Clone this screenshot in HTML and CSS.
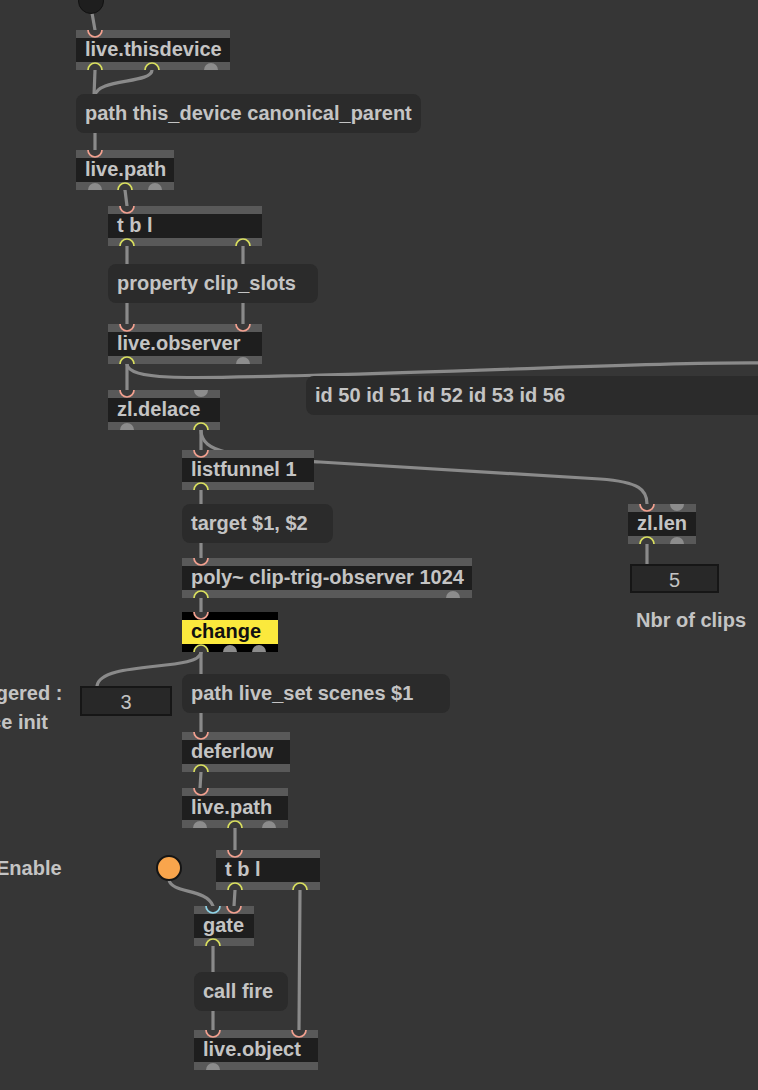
FILE: index.html
```html
<!DOCTYPE html>
<html>
<head>
<meta charset="utf-8">
<link rel="stylesheet" href="styles.css">
</head>
<body>
<div class="patcher">
  <svg class="cords" width="758" height="1090" viewBox="0 0 758 1090">
    <g fill="none" stroke="#8a8a8a" stroke-width="3.2" stroke-linecap="round">
      <path d="M92 13 L95 30"/>
      <path d="M95 70 L94 96"/>
      <path d="M152 70 C152 84, 96 78, 95 96"/>
      <path d="M95 133 L95 150"/>
      <path d="M125 190 L127 206"/>
      <path d="M127 246 L127 264"/>
      <path d="M243 246 L243 324"/>
      <path d="M127 303 L127 324"/>
      <path d="M127 364 L127 390"/>
      <path d="M127 364 C128 382, 200 378, 320 375 C500 371, 650 362, 762 363"/>
      <path d="M201 430 L201 450"/>
      <path d="M201 430 C201 455, 240 456, 320 462 L600 479 C640 482, 647 490, 647 504"/>
      <path d="M201 490 L201 504"/>
      <path d="M201 543 L201 558"/>
      <path d="M201 598 L201 612"/>
      <path d="M201 652 L201 674"/>
      <path d="M201 652 C201 672, 100 660, 97 686"/>
      <path d="M201 713 L201 732"/>
      <path d="M201 772 L200 788"/>
      <path d="M235 828 L235 850"/>
      <path d="M235 890 L234 906"/>
      <path d="M300 890 L299 1030"/>
      <path d="M169 880 C172 894, 206 888, 213 906"/>
      <path d="M213 946 L213 972"/>
      <path d="M213 1011 L213 1030"/>
      <path d="M647 544 L647 564"/>
    </g>
  </svg>

  <div class="dot dot-top"></div>
  <div class="dot dot-toggle"></div>

  <div class="obj n-thisdevice"><span class="t">live.thisdevice</span></div>
  <div class="msg m-path1">path this_device canonical_parent</div>
  <div class="obj n-livepath1"><span class="t">live.path</span></div>
  <div class="obj n-tbl1"><span class="t">t b l</span></div>
  <div class="msg m-property">property clip_slots</div>
  <div class="obj n-observer"><span class="t">live.observer</span></div>
  <div class="obj n-delace"><span class="t">zl.delace</span></div>
  <div class="msg m-ids">id 50 id 51 id 52 id 53 id 56</div>
  <div class="obj n-listfunnel"><span class="t">listfunnel 1</span></div>
  <div class="msg m-target">target $1, $2</div>
  <div class="obj n-poly"><span class="t">poly~ clip-trig-observer 1024</span></div>
  <div class="obj obj-change n-change"><span class="t">change</span></div>
  <div class="obj n-zllen"><span class="t">zl.len</span></div>
  <div class="num num-5">5</div>
  <div class="comment c-nbr">Nbr of clips</div>
  <div class="comment c-trig">Triggered :<br>Since init</div>
  <div class="num num-3">3</div>
  <div class="msg m-scenes">path live_set scenes $1</div>
  <div class="obj n-deferlow"><span class="t">deferlow</span></div>
  <div class="obj n-livepath2"><span class="t">live.path</span></div>
  <div class="comment c-enable">Enable</div>
  <div class="obj n-tbl2"><span class="t">t b l</span></div>
  <div class="obj n-gate"><span class="t">gate</span></div>
  <div class="msg m-callfire">call fire</div>
  <div class="obj n-liveobject"><span class="t">live.object</span></div>

  <svg class="ports" width="758" height="1090" viewBox="0 0 758 1090">
    <defs>
      <path id="in" d="M-7 0 A7 7 0 0 0 7 0"/>
      <path id="out" d="M-7 0 A7 7 0 0 1 7 0"/>
    </defs>
    <g class="pin">
      <use href="#in" x="95" y="30"/>
      <use href="#in" x="95" y="150"/>
      <use href="#in" x="127" y="206"/>
      <use href="#in" x="127" y="324"/>
      <use href="#in" x="243" y="324"/>
      <use href="#in" x="127" y="390"/>
      <use href="#in" x="201" y="450"/>
      <use href="#in" x="201" y="558"/>
      <use href="#in" x="201" y="612"/>
      <use href="#in" x="647" y="504"/>
      <use href="#in" x="201" y="732"/>
      <use href="#in" x="201" y="788"/>
      <use href="#in" x="235" y="850"/>
      <use href="#in" x="234" y="906"/>
      <use href="#in" x="213" y="1030"/>
      <use href="#in" x="299" y="1030"/>
    </g>
    <g class="pin-cold">
      <use href="#in" x="213" y="906"/>
    </g>
    <g class="pout">
      <use href="#out" x="95" y="70"/>
      <use href="#out" x="152" y="70"/>
      <use href="#out" x="125" y="190"/>
      <use href="#out" x="127" y="246"/>
      <use href="#out" x="243" y="246"/>
      <use href="#out" x="127" y="364"/>
      <use href="#out" x="201" y="430"/>
      <use href="#out" x="201" y="490"/>
      <use href="#out" x="201" y="598"/>
      <use href="#out" x="201" y="652"/>
      <use href="#out" x="647" y="544"/>
      <use href="#out" x="201" y="772"/>
      <use href="#out" x="235" y="828"/>
      <use href="#out" x="235" y="890"/>
      <use href="#out" x="300" y="890"/>
      <use href="#out" x="213" y="946"/>
    </g>
    <g class="pgray">
      <use href="#out" x="211" y="70"/>
      <use href="#out" x="95" y="190"/>
      <use href="#out" x="155" y="190"/>
      <use href="#out" x="243" y="364"/>
      <use href="#in" x="201" y="390"/>
      <use href="#out" x="127" y="430"/>
      <use href="#out" x="453" y="598"/>
      <use href="#out" x="230" y="652"/>
      <use href="#out" x="259" y="652"/>
      <use href="#in" x="677" y="504"/>
      <use href="#out" x="677" y="544"/>
      <use href="#out" x="200" y="828"/>
      <use href="#out" x="269" y="828"/>
      <use href="#out" x="213" y="1070"/>
    </g>
  </svg>
</div>
</body>
</html>
```

FILE: styles.css
```css
html, body {
  margin: 0;
  padding: 0;
  background: #363636;
}

.patcher {
  position: relative;
  width: 758px;
  height: 1090px;
  overflow: hidden;
  background: #363636;
  font-family: "Liberation Sans", Arial, sans-serif;
  font-weight: bold;
  font-size: 20px;
  color: #c4c4c4;
}

.cords, .ports {
  position: absolute;
  left: 0;
  top: 0;
}
.cords { z-index: 0; }
.ports { z-index: 3; }

.pin use { fill: #3a3a3a; stroke: #f2a08f; stroke-width: 1.7; }
.pin-cold use { fill: #3a3a3a; stroke: #8fd3e6; stroke-width: 1.7; }
.pout use { fill: #3a3a3a; stroke: #d9df5e; stroke-width: 1.7; }
.pgray use { fill: #8c8c8c; stroke: none; }

/* objects */
.obj {
  position: absolute;
  z-index: 1;
  box-sizing: border-box;
  height: 40px;
  padding: 8px 0;
  background: #595959;
  white-space: nowrap;
}
.obj .t {
  display: block;
  height: 24px;
  line-height: 22px;
  padding-left: 9px;
  background: #1e1e1e;
}
.obj-change { background: #000; }
.obj-change .t { background: #fbe93d; color: #111; }

/* messages */
.msg {
  position: absolute;
  z-index: 1;
  box-sizing: border-box;
  height: 39px;
  line-height: 39px;
  padding-left: 9px;
  border-radius: 8px;
  background: #2b2b2b;
  white-space: nowrap;
}

/* number boxes */
.num {
  position: absolute;
  z-index: 1;
  box-sizing: border-box;
  border: 2px solid #161616;
  background: #282828;
  text-align: center;
  font-weight: normal;
  font-size: 20px;
  line-height: 25px;
  padding-top: 2px;
}

/* comments */
.comment {
  position: absolute;
  z-index: 1;
  line-height: 29px;
  white-space: nowrap;
}

.dot {
  position: absolute;
  z-index: 1;
  box-sizing: border-box;
  border-radius: 50%;
}
.dot-top { left: 78px; top: -12px; width: 26px; height: 26px; background: #1e1e1e; border: 1.5px solid #111; }
.dot-toggle { left: 156px; top: 855px; width: 26px; height: 26px; background: #f9a54c; border: 2px solid #151515; }

.n-thisdevice { left: 76px; top: 30px; width: 154px; }
.m-path1 { left: 76px; top: 94px; width: 345px; }
.n-livepath1 { left: 76px; top: 150px; width: 98px; }
.n-tbl1 { left: 108px; top: 206px; width: 154px; }
.m-property { left: 108px; top: 264px; width: 210px; }
.n-observer { left: 108px; top: 324px; width: 154px; }
.n-delace { left: 108px; top: 390px; width: 112px; }
.m-ids { left: 306px; top: 376px; width: 480px; }
.n-listfunnel { left: 182px; top: 450px; width: 132px; }
.m-target { left: 182px; top: 504px; width: 151px; }
.n-poly { left: 182px; top: 558px; width: 290px; }
.n-change { left: 182px; top: 612px; width: 96px; }
.n-zllen { left: 628px; top: 504px; width: 68px; }
.num-5 { left: 630px; top: 564px; width: 89px; height: 29px; }
.c-nbr { left: 636px; top: 606px; }
.c-trig { left: -41px; top: 679px; }
.num-3 { left: 80px; top: 686px; width: 92px; height: 30px; }
.m-scenes { left: 182px; top: 674px; width: 268px; }
.n-deferlow { left: 182px; top: 732px; width: 108px; }
.n-livepath2 { left: 182px; top: 788px; width: 106px; }
.c-enable { left: -4px; top: 854px; }
.n-tbl2 { left: 216px; top: 850px; width: 104px; }
.n-gate { left: 194px; top: 906px; width: 60px; }
.m-callfire { left: 194px; top: 972px; width: 94px; }
.n-liveobject { left: 194px; top: 1030px; width: 124px; }
```
